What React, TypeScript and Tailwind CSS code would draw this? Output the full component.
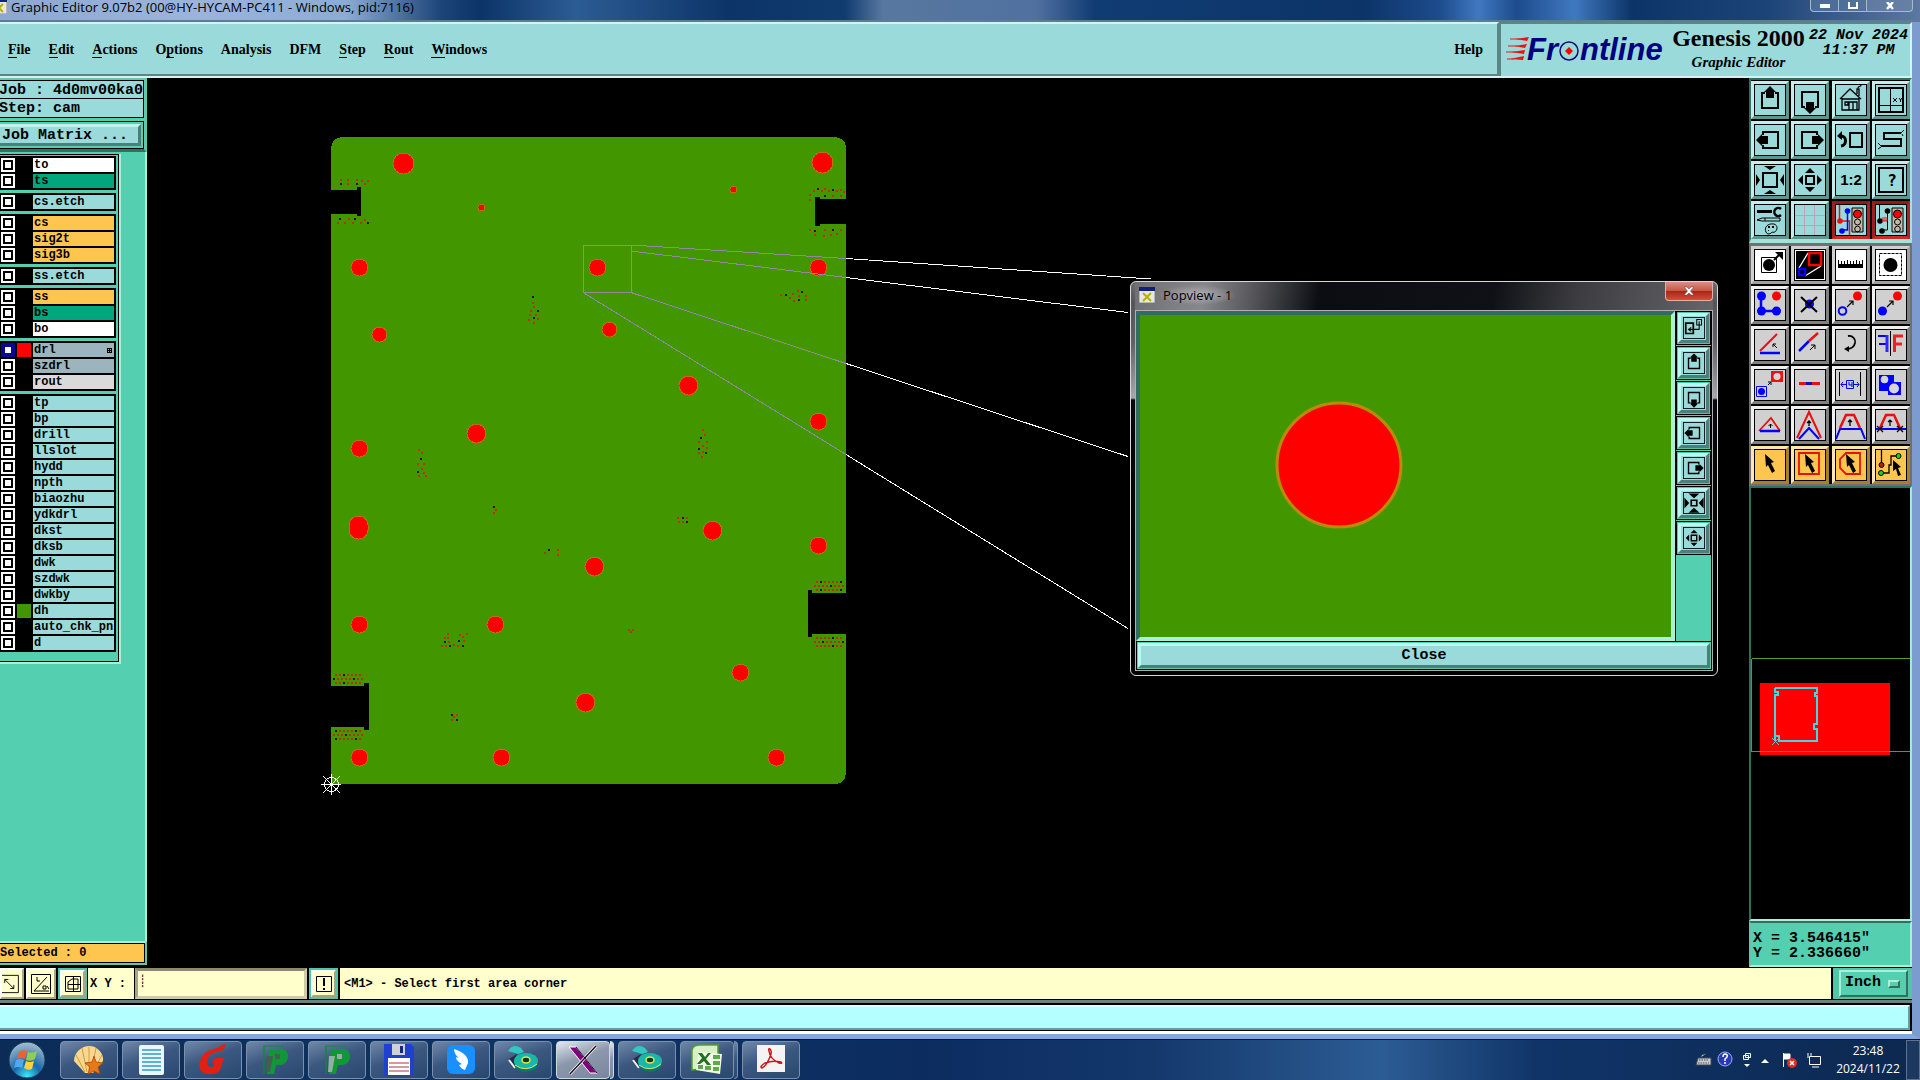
import type { ReactNode } from 'react';

type Point = [number, number];

interface Layer {
  name: string;
  bg: string;
  swatch?: string;
  active?: boolean;
  grid?: boolean;
}

const SIGNAL = 'bg-[#ffc64f]';
const MASK = 'bg-[#00a67c]';
const MISC = 'bg-[#9bdada]';

const layerGroups: Layer[][] = [
  [{ name: 'to', bg: 'bg-white' }, { name: 'ts', bg: MASK }],
  [{ name: 'cs.etch', bg: MISC }],
  [{ name: 'cs', bg: SIGNAL }, { name: 'sig2t', bg: SIGNAL }, { name: 'sig3b', bg: SIGNAL }],
  [{ name: 'ss.etch', bg: MISC }],
  [{ name: 'ss', bg: SIGNAL }, { name: 'bs', bg: MASK }, { name: 'bo', bg: 'bg-white' }],
  [
    { name: 'drl', bg: 'bg-[#9bb4be]', swatch: 'bg-[#ff0000]', active: true, grid: true },
    { name: 'szdrl', bg: 'bg-[#9bb4be]' },
    { name: 'rout', bg: 'bg-[#dadada]' },
  ],
  [
    { name: 'tp', bg: MISC },
    { name: 'bp', bg: MISC },
    { name: 'drill', bg: MISC },
    { name: 'llslot', bg: MISC },
    { name: 'hydd', bg: MISC },
    { name: 'npth', bg: MISC },
    { name: 'biaozhu', bg: MISC },
    { name: 'ydkdrl', bg: MISC },
    { name: 'dkst', bg: MISC },
    { name: 'dksb', bg: MISC },
    { name: 'dwk', bg: MISC },
    { name: 'szdwk', bg: MISC },
    { name: 'dwkby', bg: MISC },
    { name: 'dh', bg: MISC, swatch: 'bg-[#429700]' },
    { name: 'auto_chk_pnl', bg: MISC },
    { name: 'd', bg: MISC },
  ],
];

// label and index of the underlined mnemonic
const menus: [string, number][] = [
  ['File', 0],
  ['Edit', 0],
  ['Actions', 0],
  ['Options', 1],
  ['Analysis', -1],
  ['DFM', -1],
  ['Step', 0],
  ['Rout', 0],
  ['Windows', 0],
];

/* ---------- toolbar glyphs, all on a 32x32 grid ---------- */

const BLUE = '#0000ff';
const RED = '#e81010';

const panGlyph = (
  <>
    <path d="M11 9H8v15h16V9h-3" fill="none" stroke="#000" strokeWidth="2" />
    <path d="M16 2l6 6h-2v6h-8V8h-2z" />
  </>
);

const cursorPath = 'M11 5l9 8-3 1 4 8-3 2-4-8-2 2z';

const glyphs: Record<string, ReactNode> = {
  up: panGlyph,
  down: <g transform="rotate(180 16 16)">{panGlyph}</g>,
  left: <g transform="rotate(-90 16 16)">{panGlyph}</g>,
  right: <g transform="rotate(90 16 16)">{panGlyph}</g>,
  home: (
    <g fill="none" stroke="#000" strokeWidth="1.3">
      <path d="M5 15L15 5l11 10M7 14v12h17V14M7 15h17M22 10V5h2v7M23 4c0-2 3-1 3-3" />
      <path d="M14 26v-8h8v8M18 18v8M10 18h3v3h-3z" />
    </g>
  ),
  split: (
    <>
      <path d="M4 4h24v24H4z" fill="none" stroke="#000" strokeWidth="2" />
      <path d="M15.500 4v24M4 21.500h24" stroke="#000" />
      <path d="M18 14l4 4m0-4l-4 4m6-4l1.500 2 1.500-2m-1.500 2v2" fill="none" stroke="#000" />
    </>
  ),
  prev: (
    <>
      <path d="M15 9h12v14H15z" fill="none" stroke="#000" strokeWidth="2" />
      <path d="M6 22c6-1 6-10 0-10H5" fill="none" stroke="#000" strokeWidth="3" />
      <path d="M2 12l5-5v9z" />
    </>
  ),
  snake: (
    <>
      <path d="M26 9H9v6h17v7H6" fill="none" stroke="#000" strokeWidth="2" />
      <path d="M26 9l3-3m-1 6l-1-2M6 22l-3-3m0 6l3-2" stroke="#000" />
    </>
  ),
  zoomOut: (
    <>
      <path d="M9 9h14v14H9z" fill="none" stroke="#000" strokeWidth="2" />
      <path d="M10 2h12l-6 4zM10 30h12l-6-4zM2 10v12l4-6zM30 10v12l-4-6z" />
    </>
  ),
  zoomIn: (
    <>
      <path d="M12 12h8v8h-8z" fill="none" stroke="#000" strokeWidth="2" />
      <path d="M11 9h10l-5-5zM11 23h10l-5 5zM9 11v10l-5-5zM23 11v10l5-5z" />
    </>
  ),
  shrink: (
    <>
      <path d="M12 12h8v8h-8z" fill="none" stroke="#000" strokeWidth="2.500" />
      <path d="M8 2h16l-8 7zM8 30h16l-8-7zM2 8v16l7-8zM30 8v16l-7-8z" />
    </>
  ),
  ratio: (
    <text x="16" y="21" textAnchor="middle" fontSize="15" fontWeight="700" fontFamily="Liberation Sans, sans-serif">
      1:2
    </text>
  ),
  query: (
    <>
      <path d="M4 4h24v24H4z" fill="none" stroke="#000" strokeWidth="2" />
      <text x="17" y="22" textAnchor="middle" fontSize="16" fontWeight="700" fontFamily="DejaVu Sans Mono, monospace">
        ?
      </text>
    </>
  ),
  tools: (
    <>
      <path d="M3 6h15v3H3z" />
      <path d="M27 5a4 4 0 1 0 0 6" fill="none" stroke="#000" strokeWidth="2.500" />
      <path d="M3 16l5-2h18v3H8zM11 14v3M20 20c-7-1-10 4-8 8 1 3 5 2 6 0 4 2 8-6 2-8z" fill="none" stroke="#000" />
      <path d="M14 22h2v2h-2zM18 22h2v2h-2zM14 26h1v1h-1z" />
    </>
  ),
  grid: <path d="M10.500 1v30M20.500 1v30M1 11.500h30M1 21.500h30" stroke="#c4a0b4" />,
  netColor: (
    <>
      <path d="M4.500 1v16h10v14" fill="none" stroke={RED} strokeWidth="1.500" />
      <path d="M12.500 6v20H7" fill="none" stroke={BLUE} strokeWidth="1.500" />
      <circle cx="5" cy="17" r="2.800" fill={RED} />
      <circle cx="12.500" cy="7" r="2.800" fill={BLUE} />
      <circle cx="7" cy="27" r="2.800" fill={BLUE} />
      <path d="M17 4h11v24H17z" fill="#c4b8a8" stroke="#000" />
      <circle cx="22.500" cy="10" r="4" fill="#f00" stroke="#000" />
      <circle cx="22.500" cy="18" r="3" fill="none" stroke="#000" />
      <circle cx="22.500" cy="25" r="2.800" fill="none" stroke="#000" />
    </>
  ),
  netBlack: (
    <>
      <path d="M4.500 1v16M12.500 6v20H7" fill="none" stroke="#000" />
      <circle cx="5" cy="17" r="2.800" />
      <circle cx="12.500" cy="7" r="2.800" />
      <circle cx="7" cy="27" r="2.800" />
      <path d="M7 17h5M8 13v4m2-4v4m2-4v4" stroke={RED} />
      <path d="M17 4h11v24H17z" fill="#c4b8a8" stroke="#000" />
      <circle cx="22.500" cy="10" r="4" fill="#f00" stroke="#000" />
      <circle cx="22.500" cy="18" r="3" fill="none" stroke="#000" />
      <circle cx="22.500" cy="25" r="2.800" fill="none" stroke="#000" />
    </>
  ),
  padMove: (
    <>
      <path d="M7.500 8.500h15v15h-15z" fill="none" stroke="#000" />
      <circle cx="15" cy="16" r="6" />
      <path d="M20 11l5-5" stroke="#000" strokeWidth="2" />
      <path d="M21 3h8v8z" />
    </>
  ),
  popview: (
    <>
      <path d="M2 2h28v28H2z" />
      <path d="M14 4L5 19M27 17L11 27" stroke="#fff" strokeWidth="1.300" />
      <path d="M15 4h12v12H15z" fill="none" stroke="#f00" strokeWidth="2.500" />
      <path d="M5 20h6v6H5z" fill="none" stroke={BLUE} strokeWidth="2.500" />
    </>
  ),
  ruler: (
    <path d="M3 19V11h1v4h2v-3h1v3h2v-3h1v3h2v-4h1v4h2v-3h1v3h2v-3h1v3h2v-4h1v4h2v-3h1v3h2v-4h1v8z" />
  ),
  dashedPad: (
    <>
      <path d="M4.500 4.500h22v22h-22z" fill="none" stroke="#000" strokeDasharray="3 1" />
      <circle cx="15.500" cy="16" r="7" />
    </>
  ),
  copyNet: (
    <>
      <path d="M7 7v15h15" fill="none" stroke={BLUE} strokeWidth="2.500" />
      <circle cx="7.500" cy="7" r="4.500" fill={BLUE} />
      <circle cx="7.500" cy="22" r="4.500" fill={BLUE} />
      <circle cx="22.500" cy="22" r="4.500" fill={BLUE} />
      <circle cx="22.500" cy="7" r="4.500" fill="#f00" />
    </>
  ),
  erase: (
    <>
      <circle cx="15.500" cy="15" r="4.500" fill={BLUE} />
      <path d="M7 8l16 15M23 8L7 23" stroke="#000" strokeWidth="2" />
    </>
  ),
  copyPad: (
    <>
      <circle cx="7.500" cy="22" r="3.800" fill="none" stroke={BLUE} strokeWidth="2" />
      <circle cx="22.500" cy="7" r="4.500" fill="#f00" />
      <path d="M12 18l6-6m-4 0h4v4" fill="none" stroke="#000" strokeWidth="1.200" />
    </>
  ),
  movePad: (
    <>
      <circle cx="7.500" cy="22" r="4.500" fill={BLUE} />
      <circle cx="22.500" cy="7" r="4.500" fill="#f00" />
      <path d="M12 18l6-6m-4 0h4v4" fill="none" stroke="#000" strokeWidth="1.200" />
    </>
  ),
  angle: (
    <>
      <path d="M6 22L23 5" stroke={RED} strokeWidth="2" />
      <path d="M6 24h20" stroke={BLUE} strokeWidth="2.500" />
      <path d="M23 19l-4-4m0 3v-3h3" fill="none" stroke="#000" />
    </>
  ),
  extend: (
    <>
      <path d="M5 22l10-10" stroke={BLUE} strokeWidth="2.500" />
      <path d="M15 12l9-8" stroke={RED} strokeWidth="2.500" />
      <path d="M16 21l5-5m-4 0h4v4" fill="none" stroke="#000" />
    </>
  ),
  rotate: (
    <>
      <path d="M13 7c5-1 8 4 7 7-1 5-4 6-9 6" fill="none" stroke="#000" strokeWidth="1.800" />
      <path d="M9 20l5-3v6z" />
    </>
  ),
  mirror: (
    <>
      <path d="M3 7h10M4 15h9" fill="none" stroke={BLUE} strokeWidth="2" />
      <path d="M12 6v17" stroke="#2a2aff" strokeWidth="3" />
      <path d="M15.500 2v25" stroke="#000" />
      <path d="M19.500 23V7H28M19 15h8" fill="none" stroke="#f02020" strokeWidth="3" />
    </>
  ),
  moveLayer: (
    <>
      <path d="M2.500 17.500h10v10h-10z" fill="none" stroke={BLUE} />
      <circle cx="7.500" cy="22.500" r="3.500" fill={BLUE} />
      <path d="M17 2h12v11H17z" fill="#f01010" />
      <circle cx="23" cy="7.500" r="3.500" fill="#d6d6d6" />
      <path d="M14 16l3-3m-3 0h3v3" fill="none" stroke="#000" />
    </>
  ),
  segment: (
    <>
      <path d="M5 14.500h21" stroke={RED} strokeWidth="3" />
      <path d="M12 14.500h6" stroke="#1010c0" strokeWidth="3" />
    </>
  ),
  spacing: (
    <>
      <path d="M4.500 3v24M25.500 3v24" stroke="#000" />
      <path d="M6 15.500h5m8 0h5M8 13l-2 2.500 2 2.500M22 13l2 2.500-2 2.500M11.500 11.500h7v8h-7zM14 13v3h3m0-3v5" fill="none" stroke={BLUE} />
    </>
  ),
  cluster: (
    <>
      <path d="M4 6h15v7h7v13H13v-4H4z" fill={BLUE} />
      <circle cx="9.500" cy="10.500" r="3.800" fill="#d6d6d6" />
      <circle cx="19" cy="19.500" r="5" fill="#d6d6d6" />
    </>
  ),
  triLow: (
    <>
      <path d="M5 22L17 9l9 13" fill="none" stroke={RED} strokeWidth="1.800" />
      <path d="M6 22h20" stroke={BLUE} strokeWidth="2.500" />
      <path d="M16.500 19v-4m-2 2l2-2 2 2" fill="none" stroke="#000" />
    </>
  ),
  triHigh: (
    <>
      <path d="M3 29L15 3l12 26" fill="none" stroke={RED} strokeWidth="2" />
      <path d="M5 30l10-11 10 11" fill="none" stroke={BLUE} strokeWidth="2" />
      <path d="M15 17v-5m-2 2l2-2 2 2" fill="none" stroke="#000" strokeWidth="1.300" />
    </>
  ),
  trapezoid: (
    <>
      <path d="M1 30l4-10h21l4 10" fill="none" stroke={BLUE} strokeWidth="2" />
      <path d="M5 19l6-13h8l6 13" fill="none" stroke={RED} strokeWidth="2.500" />
      <path d="M15 17v-6m-2 2l2-2 2 2" fill="none" stroke="#000" strokeWidth="1.300" />
    </>
  ),
  trapezoidCut: (
    <>
      <path d="M1 20h30" stroke={BLUE} strokeWidth="2" />
      <path d="M5 19l6-13h8l6 13" fill="none" stroke={RED} strokeWidth="2.500" />
      <path d="M15 17v-6m-2 2l2-2 2 2M2 17l6 6m0-6l-6 6M22 17l6 6m0-6l-6 6" fill="none" stroke="#000" strokeWidth="1.200" />
    </>
  ),
  select: <path d={cursorPath} />,
  selectRect: (
    <>
      <path d="M5 4h20v21H5z" fill="none" stroke={RED} strokeWidth="1.800" />
      <path d={cursorPath} />
    </>
  ),
  selectPoly: (
    <>
      <path d="M11 4h14v21H11l-6-6v-9z" fill="none" stroke={RED} strokeWidth="1.800" />
      <path d={cursorPath} />
    </>
  ),
  selectNet: (
    <>
      <path d="M6.500 1v15M6 24h8v-8h2V7h7" fill="none" stroke="#000" strokeWidth="1.300" />
      <circle cx="6.500" cy="16" r="2.500" fill="#c02000" stroke="#000" />
      <circle cx="6" cy="24" r="2.500" fill="#20d020" stroke="#000" />
      <circle cx="23.500" cy="7" r="2.500" fill="#20d020" stroke="#000" />
      <path d="M18 11l8 7-3 1 3 7-3 1-2-7-3 2z" />
    </>
  ),
  detach: (
    <>
      <path d="M4 9h11v15H4z" fill="none" stroke="#000" strokeWidth="2.500" />
      <path d="M20 3.500h7v8h-7zM23.500 6v12H8m4-3l-4 3 4 3" fill="none" stroke="#000" strokeWidth="1.500" />
    </>
  ),
};

const viewTools = [
  'up', 'down', 'home', 'split',
  'left', 'right', 'prev', 'snake',
  'zoomOut', 'zoomIn', 'ratio', 'query',
  'tools', 'grid', 'netColor', 'netBlack',
];

const editTools = [
  'padMove', 'popview', 'ruler', 'dashedPad',
  'copyNet', 'erase', 'copyPad', 'movePad',
  'angle', 'extend', 'rotate', 'mirror',
  'moveLayer', 'segment', 'spacing', 'cluster',
  'triLow', 'triHigh', 'trapezoid', 'trapezoidCut',
  'select', 'selectRect', 'selectPoly', 'selectNet',
];

const tones = {
  aqua: 'bg-[#9bdada] border-t-[#c4eeec] border-l-[#c4eeec] border-b-[#5f9490] border-r-[#5f9490]',
  alert: 'bg-[#9bdada] border-t-[#8c1c1c] border-l-[#a02020] border-b-[#d02828] border-r-[#b02020]',
  white: 'bg-white border-[#d0d0d0] border-b-[#a0a0a0] border-r-[#a0a0a0]',
  grey: 'bg-[#d0d0d0] border-t-[#f0f0f0] border-l-[#f0f0f0] border-b-[#808080] border-r-[#808080]',
  amber: 'bg-[#ffc64f] border-t-[#ffe6b0] border-l-[#ffe6b0] border-b-[#a8802c] border-r-[#a8802c]',
};

function ToolButton({ name, tone }: { name: string; tone: keyof typeof tones }) {
  return (
    <button aria-label={name} className={`h-[38px] w-[38px] border-[3px] ${tones[tone]}`}>
      <svg viewBox="0 0 32 32" className="block h-8 w-8">
        <rect x="0.500" y="0.500" width="31" height="31" fill="none" stroke="#000" />
        {glyphs[name]}
      </svg>
    </button>
  );
}

function editTone(index: number): keyof typeof tones {
  if (index < 4) return 'white';
  return index < 20 ? 'grey' : 'amber';
}

/* ---------- board ---------- */

const holes: [number, number, number][] = [
  [403, 163, 10], [822, 162, 10], [733, 189, 3], [481, 207, 3],
  [359, 267, 8], [597, 267, 8], [818, 267, 8], [379, 334, 7],
  [609, 329, 7], [688, 385, 9], [818, 421, 8], [476, 433, 9],
  [359, 448, 8], [712, 530, 9], [818, 545, 8], [594, 566, 9],
  [495, 624, 8], [359, 624, 8], [740, 672, 8], [585, 702, 9],
  [359, 757, 8], [501, 757, 8], [776, 757, 8],
];

const vias: Point[] = [
  [340, 179], [340, 183], [347, 179], [347, 183], [356, 179], [356, 183], [361, 180], [367, 180], [364, 183],
  [339, 218], [337, 222], [344, 222], [348, 218], [354, 218], [352, 222], [360, 222], [364, 219], [367, 222],
  [809, 194], [809, 199], [813, 190], [817, 188], [821, 190], [824, 188], [828, 190], [832, 189], [836, 190],
  [840, 189], [843, 191], [824, 195], [832, 195], [840, 195],
  [809, 229], [814, 230], [814, 234], [824, 229], [823, 235], [832, 229], [830, 234], [840, 229], [836, 233],
  [532, 296], [532, 302], [533, 306], [530, 310], [537, 310], [529, 314], [535, 314], [528, 319], [533, 317],
  [537, 318], [533, 322],
  [780, 294], [785, 294], [789, 297], [792, 293], [797, 290], [801, 291], [798, 295], [805, 295], [793, 300],
  [798, 299], [805, 299],
  [702, 429], [704, 434], [700, 437], [698, 441], [706, 441], [702, 445], [698, 448], [702, 451], [706, 447],
  [698, 452], [705, 452], [701, 456],
  [418, 449], [421, 452], [420, 458], [417, 463], [423, 463], [421, 468], [417, 471], [423, 472], [418, 475],
  [425, 475],
  [493, 506], [495, 509], [493, 512], [544, 552], [548, 549], [557, 549], [557, 554],
  [677, 517], [682, 517], [686, 517], [678, 521], [682, 521], [686, 521],
  [447, 633], [444, 637], [447, 637], [444, 641], [448, 641], [441, 645], [445, 645], [449, 645], [453, 644],
  [459, 634], [466, 633], [458, 640], [462, 636], [463, 640], [457, 645], [462, 645],
  [628, 629], [632, 629], [630, 631], [451, 714], [456, 714], [453, 716], [451, 719], [456, 719],
];

// three staggered rows next to each edge connector
function connectorRows(x: number, y: number): Point[] {
  return [0, 1, 2].flatMap((row) =>
    Array.from({ length: row === 1 ? 8 : 7 }, (_, i): Point => [x + i * 4 + (row === 1 ? 0 : 2), y + row * 4]),
  );
}

const connectorVias = [
  ...connectorRows(814, 581),
  ...connectorRows(814, 637),
  ...connectorRows(333, 674),
  ...connectorRows(333, 730),
];

function BoardCanvas() {
  return (
    <svg className="absolute inset-0 block h-full w-full" shapeRendering="crispEdges">
      <g transform="translate(-147 -78)">
        <g stroke="#fff">
          <path d="M846 258.500L1151 279M846 277.500L1128 312.500M846 363.500L1128 456.500M846 454.500L1128 628.500" />
        </g>
        <path
          fill="#429700"
          d="M342 137H835Q846 138 846 148V199H820V197H815V226H820V224H846V593H812V590H808V637H812V634H846V773Q845 784 835 784H331V727H364V730H369V683H364V686H331V214H357V216H361V187H357V190H331V148Q332 138 342 137Z"
        />
        {holes.map(([x, y, r]) => (
          <circle key={`${x}-${y}`} cx={x + 0.5} cy={y + 0.5} r={r + 0.5} fill="#f00" stroke="#c07000" />
        ))}
        <rect x="349" y="516" width="19" height="23" rx="9" fill="#f00" stroke="#c07000" />
        {vias.map(([x, y], i) => (
          <rect key={i} x={x} y={y} width="2" height="2" fill={i % 4 === 1 ? '#301000' : '#c03000'} />
        ))}
        {connectorVias.map(([x, y], i) => (
          <rect key={i} x={x} y={y} width="2" height="2" fill={i % 5 === 1 ? '#301000' : '#b83000'} />
        ))}
        <path
          fill="none"
          stroke="#9488a0"
          d="M583.500 245.500H631.500V292.500H583.500ZM631 245L846 258.500M631 251L846 277.500M631 292.500L846 363.500M584 293L846 454.500"
        />
        <g fill="none" stroke="#fff">
          <path d="M321 784.500H341M331.500 774V795M323 776L340 793M340 776L323 793" />
          <circle cx="331.500" cy="784.500" r="7" />
        </g>
      </g>
    </svg>
  );
}

/* ---------- panels ---------- */

function XIcon() {
  return (
    <svg viewBox="0 0 16 16" className="block h-4 w-4 shrink-0">
      <path d="M0 1h16v15H0z" fill="#e8e8e0" stroke="#888" />
      <path d="M0 0h16v4H0z" fill="#102080" />
      <path d="M4 6l8 8M12 6l-8 8" stroke="#b8b000" strokeWidth="2" />
    </svg>
  );
}

function Popview() {
  const tools = ['detach', 'up', 'down', 'left', 'right', 'shrink', 'zoomIn'];
  return (
    <section
      aria-label="Popview"
      className="absolute left-[983px] top-[203px] flex h-[395px] w-[588px] flex-col rounded-md border border-[#d8d8d8] bg-[linear-gradient(#6c6c70,#55555a_20px,#606064_60px,#a8a8ac_116px,#08080a_118px,#000)] px-1 pb-1"
    >
      <header className="flex h-7 items-start justify-between rounded-t bg-[linear-gradient(100deg,#707074,#88888c_12%,#5a5a5e_20%,#0c0d12_32%,#101116_62%,#3c3c40_76%,#66666a)] pl-1">
        <div className="flex h-[25px] items-center gap-1">
          <XIcon />
          <h2 className="rounded-full bg-[radial-gradient(closest-side,#b0b0b4,transparent)] px-1 font-['Open_Sans',sans-serif] text-[13px] leading-5 text-black">
            Popview - 1
          </h2>
        </div>
        <button
          aria-label="Close popview"
          className="flex h-[19px] w-12 items-center justify-center rounded-b border border-t-0 border-[#e0b0a8] bg-[linear-gradient(#d89084,#c85848_48%,#a82414_50%,#d05038)]"
        >
          <svg viewBox="0 0 12 10" className="h-[10px] w-3">
            <path d="M1 1h3l2 2 2-2h3L7.500 5 11 9H8L6 7 4 9H1l3.500-4z" fill="#fff" stroke="#504040" strokeWidth="0.500" />
          </svg>
        </button>
      </header>
      <div className="flex min-h-0 flex-1 flex-col border border-[#b0b0b0] bg-black">
        <div className="flex min-h-0 flex-1 gap-px">
          <div className="min-w-0 flex-1 border-4 border-b-[#a8f0d8] border-l-[#2f6c62] border-r-[#a8f0d8] border-t-[#2f6c62] bg-[#429700]">
            <svg className="block h-full w-full">
              <circle cx="199" cy="150" r="62" fill="#f00" stroke="#b88c08" strokeWidth="3" />
            </svg>
          </div>
          <div className="mr-px flex w-[35px] flex-col gap-px bg-[#54cfb0]">
            {tools.map((name) => (
              <div key={name} className="border border-black bg-[#54c4a8] p-px">
                <button
                  aria-label={`popview ${name}`}
                  className="flex h-[30px] w-full items-center justify-center border-[3px] border-b-[#4a807c] border-l-[#b8f8f0] border-r-[#4a807c] border-t-[#b8f8f0] bg-[#9bdada]"
                >
                  <svg viewBox="0 0 32 32" className="block h-[22px] w-[22px]">
                    <rect x="0.500" y="0.500" width="31" height="31" fill="none" stroke="#000" strokeWidth="1.500" />
                    {glyphs[name]}
                  </svg>
                </button>
              </div>
            ))}
          </div>
        </div>
        <div className="border border-black bg-[#54cfb0] p-px">
          <button className="block h-[25px] w-full border-[3px] border-b-[#4a807c] border-l-[#b8f8f0] border-r-[#4a807c] border-t-[#b8f8f0] bg-[#9bdada] font-['Liberation_Mono',monospace] text-[15px] leading-[19px] font-bold">
            Close
          </button>
        </div>
      </div>
    </section>
  );
}

function LayerRow({ layer }: { layer: Layer }) {
  return (
    <li>
      <label className="flex h-[14px] gap-0.5">
        <span className={`flex h-[14px] w-[14px] p-0.5 ${layer.active ? 'bg-[#0a0a90]' : 'bg-white'}`}>
          <input
            type="checkbox"
            className={`h-[10px] w-[10px] appearance-none border-2 bg-white ${layer.active ? 'border-[#0a0a90]' : 'border-black'}`}
          />
        </span>
        <span className={`h-[14px] w-[14px] ${layer.swatch ?? 'bg-black'}`} />
        <span className={`flex h-[14px] min-w-0 flex-1 items-center justify-between overflow-hidden pl-px pr-0.5 leading-[14px] ${layer.bg}`}>
          {layer.name}
          {layer.grid && (
            <svg viewBox="0 0 5 5" className="h-[5px] w-[5px] shrink-0" shapeRendering="crispEdges">
              <path d="M.5.5h4v4h-4zM2.500 0v5M0 2.500h5" fill="none" stroke="#000" strokeWidth="1" />
            </svg>
          )}
        </span>
      </label>
    </li>
  );
}

function JobPanel() {
  return (
    <aside className="flex w-[147px] shrink-0 flex-col bg-[#54cfb0] font-['Liberation_Mono',monospace] font-bold text-black">
      <div className="mr-px border-b-[3px] border-r-2 border-t-2 border-b-[#2f7060] border-r-[#6ac4ac] border-t-[#6ac4ac] text-[15px]">
        <div className="border border-l-0 border-black bg-[#9bdada]">
          <p className="-ml-px h-[18px] overflow-hidden whitespace-nowrap border-b border-black leading-[19px]">Job : 4d0mv00ka0</p>
          <p className="-ml-px h-[18px] leading-5">Step: cam</p>
        </div>
        <div className="mt-[3px] border border-l-0 border-black py-0.5 pr-0.5">
          <button className="block h-[22px] w-full border-[3px] border-l-0 border-b-[#4a807c] border-r-[#4a807c] border-t-[#c4f0ec] bg-[#9bdada] pl-0.5 text-left leading-[18px]">
            Job Matrix ...
          </button>
        </div>
      </div>
      <div className="flex-1 border-r-2 border-[#a8f0d8] pt-0.5">
        <div className="w-[121px] border-b-2 border-r-2 border-[#a8f0d8]">
          <div className="flex flex-col gap-[3px] border border-l-0 border-black pt-px pr-0.5 pb-[9px]">
            {layerGroups.map((group) => (
              <ul key={group[0].name} className="flex flex-col gap-0.5 bg-black py-0.5 pr-0.5 pl-px text-[12px]">
                {group.map((layer) => (
                  <LayerRow key={layer.name} layer={layer} />
                ))}
              </ul>
            ))}
          </div>
        </div>
      </div>
      <div className="border-b-2 border-black">
        <div className="border-y-2 border-r-2 border-[#6ac4ac] border-t-[#a8f0d8]">
          <p className="h-5 border border-l-0 border-black bg-[#ffc64f] text-[12px] leading-[18px]">Selected : 0</p>
        </div>
      </div>
    </aside>
  );
}

function Overview() {
  return (
    <div className="relative min-h-0 flex-1 border-2 border-b-[#a8f0d8] border-l-[#2f7060] border-r-[#a8e8dc] border-t-[#2f7060] bg-black">
      <svg className="absolute inset-0 block h-full w-full" shapeRendering="crispEdges">
        <rect x="9" y="195" width="130" height="72" fill="#f00" />
        <path d="M0.500 170.500H160M0.500 170.500V263.500H160" fill="none" stroke="#5a9c20" />
        <path
          d="M24 200H66V205H64V208H66V236H63V241H66V253H28V248H24V244M24 200V204H27V207H24V253"
          fill="none"
          stroke="#40d8e0"
          strokeWidth="2"
        />
        <path d="M21 250l7 7m0-7l-7 7" stroke="#90b0c0" />
      </svg>
    </div>
  );
}

function ToolPanel() {
  return (
    <aside className="flex w-[163px] shrink-0 flex-col bg-black">
      <div className="border-2 border-b-[4px] border-[#a8e0dc] border-l-[#2f7060] border-t-[#2f7060] bg-black pt-px">
        <div className="grid grid-cols-4 gap-0.5">
          {viewTools.map((name, i) => (
            <ToolButton key={name} name={name} tone={i > 13 ? 'alert' : 'aqua'} />
          ))}
        </div>
      </div>
      <div className="border-2 border-t-[3px] border-[#707070] bg-black">
        <div className="grid grid-cols-4 gap-0.5">
          {editTools.map((name, i) => (
            <ToolButton key={name} name={name} tone={editTone(i)} />
          ))}
        </div>
      </div>
      <Overview />
      <div className="h-[46px] border-2 border-b-[#a8f0d8] border-l-[#6ac4ac] border-r-[#a8f0d8] border-t-[#2f7060] bg-[#54cfb0] pl-0.5 pt-2 font-['Liberation_Mono',monospace] text-[15px] leading-[15px] font-bold">
        <p>X = 3.546415"</p>
        <p>Y = 2.336660"</p>
      </div>
    </aside>
  );
}

function FrontlineLogo() {
  return (
    <svg viewBox="0 0 162 36" className="block h-9 w-[162px] overflow-visible" role="img" aria-label="Frontline">
      <path d="M4 6H14M2 13H12M0 19H10M1 26H8" stroke="#e81818" />
      <path d="M9 6l14-2-2 4zM8 13l13-2-2 4zM5 19l14-2-1 4zM4 26l14-3-1 4z" fill="#f01010" />
      <g fill="#000080" fontFamily="Liberation Sans, sans-serif" fontSize="31" fontWeight="700" fontStyle="italic">
        <text x="21" y="27">Fr</text>
        <text x="74" y="27">ntline</text>
      </g>
      <circle cx="63" cy="18" r="9" fill="none" stroke="#101070" strokeWidth="1.500" />
      <path d="M63 14l4 4-4 4-4-4z" fill="#f00" />
    </svg>
  );
}

function MenuBar() {
  return (
    <div className="flex h-14 shrink-0 border-b-2 border-[#d4f4f2] font-['Liberation_Serif',serif] font-bold">
      <nav className="flex flex-1 items-center justify-between border-y-2 border-r-2 border-b-[#5a8684] border-r-[#5a8684] border-t-[#d4f4f2] bg-[#9bdada] pl-2 pr-[14px] text-[14px]">
        <ul className="flex gap-[18px]">
          {menus.map(([label, key]) => (
            <li key={label}>
              <button>
                {key < 0 ? (
                  label
                ) : (
                  <>
                    {label.slice(0, key)}
                    <span className="border-b border-black">{label[key]}</span>
                    {label.slice(key + 1)}
                  </>
                )}
              </button>
            </li>
          ))}
        </ul>
        <button>Help</button>
      </nav>
      <div className="flex w-[413px] border-2 border-b-0 border-l-[#5a8684] border-r-[#d4f4f2] border-t-[#5a8684] bg-[#9bdada] pl-[5px]">
        <div className="pt-[9px]">
          <FrontlineLogo />
        </div>
        <div className="flex-1 text-center">
          <h1 className="text-[24px] leading-7">Genesis 2000</h1>
          <p className="text-[15px] leading-5 italic">Graphic Editor</p>
        </div>
        <p className="pt-1 pr-0.5 text-center font-['Liberation_Mono',monospace] text-[15px] leading-[15px] italic">
          22 Nov 2024
          <br />
          11:37 PM
        </p>
      </div>
    </div>
  );
}

const noteButton = 'flex items-center justify-center border-2 border-b-[#a8a484] border-l-white border-r-[#a8a484] border-t-white bg-[#ffffcc]';

function MessageBar() {
  return (
    <div className="flex h-[33px] shrink-0 gap-0.5 bg-black py-px font-['Liberation_Mono',monospace] text-[12px] font-bold">
      <button aria-label="Snap off" className={`${noteButton} w-6`}>
        <svg viewBox="0 0 22 22" className="h-[22px] w-[22px]" fill="none" stroke="#000">
          <path d="M-4 1.500h22v19H-4M3 6l10 10M3 10V6h4M13 12v4H9" />
        </svg>
      </button>
      <button aria-label="Angle lock" className={`${noteButton} w-[30px]`}>
        <svg viewBox="0 0 22 22" className="h-[22px] w-[22px]" fill="none" stroke="#000">
          <path d="M1.500 1.500h19v19h-19zM4 18L17 4M4 18h15M7 4v4h3M13 13h3v3h-3zM17 13l2 3" />
        </svg>
      </button>
      <div className="w-[29px] bg-[#54c4a8] p-0.5">
        <button aria-label="Snap grid" className={`${noteButton} h-full w-full`}>
          <svg viewBox="0 0 18 18" className="h-[18px] w-[18px]" fill="none" stroke="#000">
            <path d="M1.500 1.500h15v15h-15zM9.500 2v14M4 9.500h12M4 14V7l4-3h6v10z" />
          </svg>
        </button>
      </div>
      <div className="-ml-px flex w-[219px] bg-black">
        <label htmlFor="xy" className="w-[46px] bg-[#ffffcc] pl-0.5 text-[12px] leading-8 whitespace-pre">
          X Y :
        </label>
        <input
          id="xy"
          className="ml-px min-w-0 flex-1 border-[3px] border-b-[#cfcba6] border-l-[#a8a484] border-r-[#cfcba6] border-t-[#8c8a74] bg-[#ffffcc] px-px pb-1 outline-none"
          defaultValue="┊"
        />
      </div>
      <div className="w-[29px] bg-[#54c4a8] p-0.5">
        <button aria-label="Alerts" className={`${noteButton} h-full w-full`}>
          <svg viewBox="0 0 18 18" className="h-[18px] w-[18px]">
            <path d="M1.500 1.500h15v15h-15z" fill="none" stroke="#000" />
            <path d="M8 3h2v8H8zM8 13h2v2H8z" />
          </svg>
        </button>
      </div>
      <p className="flex-1 bg-[#ffffcc] pl-1 leading-8">&lt;M1&gt; - Select first area corner</p>
      <div className="relative w-[79px] bg-[#54c4a8] py-0.5 pr-1 pl-1.5">
        <select
          aria-label="Units"
          className="h-full w-full appearance-none border-2 border-b-[#2f7060] border-l-[#a8f0d8] border-r-[#2f7060] border-t-[#a8f0d8] bg-[#54cfb0] pl-1 text-[15px] outline-none"
        >
          <option>Inch</option>
          <option>MM</option>
        </select>
        <span className="pointer-events-none absolute right-3 top-3 h-2 w-3 border-2 border-b-[#2f7060] border-l-[#a8f0d8] border-r-[#2f7060] border-t-[#a8f0d8]" />
      </div>
    </div>
  );
}

/* ---------- windows taskbar ---------- */

const discGlyph = (
  <>
    <path d="M1 7q5-8 13-3l3 4-6 2z" fill="#30c8c0" />
    <path d="M2 15l8-5 4 14-8-3z" fill="#302848" />
    <path d="M2 16l6 8" stroke="#f0f0f0" strokeWidth="2" />
    <ellipse cx="19" cy="19" rx="12" ry="9" fill="#087868" />
    <ellipse cx="19" cy="17" rx="12" ry="8" fill="#18b8a8" />
    <ellipse cx="19" cy="16" rx="4" ry="3" fill="#083830" stroke="#f0e040" strokeWidth="1.500" />
    <path d="M8 21q11 8 22-1" fill="none" stroke="#e0e060" />
  </>
);

function pGlyph(accent: string) {
  return (
    <>
      <path d="M5 30V2h20" fill="none" stroke="#108838" strokeWidth="1.200" />
      <path d="M10 5h12c10 0 9 16-1 16h-4l-2 9H8z" fill="#109838" />
      <path d="M8 12h6l-3 16H7z" fill={accent} />
      <path d="M16 10h5v5h-5z" fill={accent} />
    </>
  );
}

interface Task {
  name: string;
  art: ReactNode;
  active?: boolean;
  stacked?: boolean;
}

const taskIcons: Task[] = [
  {
    name: 'Shell',
    art: (
      <>
        <path d="M16 2c9 0 15 8 14 15L20 29h-8L1 17C1 9 8 2 16 2z" fill="#f8d890" />
        <path d="M16 28L16 3M14 28L9 4M12 28L3 11M18 28l5-24M20 28l9-17" stroke="#d89838" />
        <path d="M21 12l2 6 7 1-5 4 2 7-6-3-6 3 2-7-5-4 7-1z" fill="#e87818" stroke="#a84808" strokeWidth="0.800" />
      </>
    ),
  },
  {
    name: 'Notes',
    art: (
      <>
        <rect x="4" y="1" width="25" height="30" rx="2" fill="#e8f8ff" />
        <path d="M7 6h19M7 10h19M7 14h19M7 18h19M7 22h19M7 26h19" stroke="#3098c8" strokeWidth="1.500" />
      </>
    ),
  },
  {
    name: 'G',
    art: <path d="M29 0q-2 8-9 8-9 1-10 10 0 6 6 5l2-4h-3l3-5h9l-4 12q-2 4-9 4C2 30-1 22 5 13 10 5 16 6 22 3q3-3 7-3z" fill="#e02010" />,
  },
  { name: 'Pcb', art: pGlyph('#406050') },
  { name: 'Pcb 2', art: pGlyph('#90b0a0') },
  {
    name: 'Save',
    art: (
      <>
        <path d="M1 0h27l3 3v29H1z" fill="#2040d0" />
        <path d="M9 0h13v11H9z" fill="#d0d0d8" />
        <path d="M17 2h3v7h-3z" fill="#182878" />
        <path d="M5 14h22v17H5z" fill="#fff" />
        <path d="M6 19h20M6 23h20M6 27h20" stroke="#b03040" />
      </>
    ),
  },
  {
    name: 'Wing',
    art: (
      <>
        <rect x="2" y="1" width="28" height="29" rx="6" fill="#1890ff" />
        <path d="M9 5q15 5 14 14l-3 7q-4-1-6-5l3-1q-6-3-6-7l3 1q-5-4-5-9z" fill="#fff" />
      </>
    ),
  },
  { name: 'Disc', art: discGlyph },
  {
    name: 'X server',
    active: true,
    stacked: true,
    art: (
      <>
        <path d="M2 3h7l21 26h-7z" fill="#800080" stroke="#fff" />
        <path d="M29 2L3 30" stroke="#fff" strokeWidth="3" />
        <path d="M29 2L3 30" stroke="#201020" strokeWidth="1.500" />
        <path d="M9 3l21 26" stroke="#101010" />
      </>
    ),
  },
  { name: 'Disc 2', art: discGlyph },
  {
    name: 'Excel',
    stacked: true,
    art: (
      <>
        <path d="M1 26V6q1-5 8-5h18v22z" fill="#d8f0c8" stroke="#50a030" strokeWidth="1.500" />
        <path d="M8 8l23 2-2 20-24-4z" fill="#f0f8e8" />
        <path d="M22 11h7v4h-7zM22 17h7v4h-7zM22 23h6v4h-6zM14 22h6v4h-6zM7 21h5v4H7z" fill="#60a848" />
        <path d="M7 9h4l3 4 3-4h3l-5 6 5 6h-4l-3-4-4 3H6l5-6z" fill="#207020" />
      </>
    ),
  },
  {
    name: 'Pdf',
    art: (
      <>
        <path d="M2 1h28v27H2z" fill="#f4f4f4" />
        <path d="M15 5q3 3-1 10-3 7-7 9-3-1 3-5 8-3 16-1 2 2-2 1-9-4-10-12-1-3 1-2z" fill="none" stroke="#d01818" strokeWidth="1.500" />
      </>
    ),
  },
];

function TaskButton({ task }: { task: Task }) {
  const look = task.active
    ? 'border-[#d0d8e0] bg-[linear-gradient(160deg,#e0e8f0,#8c98ac_45%,#78869c)]'
    : 'border-[#7c90ac] bg-[linear-gradient(160deg,#7088a8,#3c5880_45%,#284870)]';
  return (
    <div className="flex h-[38px] w-[58px]">
      <button aria-label={task.name} className={`flex h-full flex-1 items-center justify-center rounded-sm border ${look}`}>
        <svg viewBox="0 0 32 32" className="h-8 w-8">
          {task.art}
        </svg>
      </button>
      {task.stacked && <span className={`h-full w-1 rounded-r-sm border border-l-0 ${look}`} />}
    </div>
  );
}

function Taskbar() {
  return (
    <footer className="flex h-[41px] shrink-0 items-center border-t border-[#060c18] bg-[linear-gradient(90deg,#0c2c58,#103460_30%,#0c2c60_48%,#14386c_60%,#2c5c94_72%,#103468_80%,#0c2850)] font-['Open_Sans',sans-serif] text-white">
      <button aria-label="Start" className="flex w-[60px] justify-start pl-2">
        <svg viewBox="0 0 38 38" className="h-[38px] w-[38px]">
          <defs>
            <radialGradient id="orb" cx="0.500" cy="0.950" r="0.950">
              <stop offset="0" stopColor="#40e8ff" />
              <stop offset="0.400" stopColor="#1868a8" />
              <stop offset="1" stopColor="#a8c0d0" />
            </radialGradient>
          </defs>
          <circle cx="19" cy="19" r="18" fill="url(#orb)" stroke="#183850" />
          <path d="M11 11q4-3 8-1l-2 8q-4-2-8 0z" fill="#f06030" />
          <path d="M20 11q4 2 9-1l-2 8q-4 3-9 1z" fill="#90d050" />
          <path d="M8 19q4-2 8 0l-2 8q-4-2-8 0z" fill="#50a8f0" />
          <path d="M18 20q4 2 8 0l-2 8q-4 2-8-1z" fill="#ffd040" />
        </svg>
      </button>
      <div className="flex gap-1">
        {taskIcons.map((task) => (
          <TaskButton key={task.name} task={task} />
        ))}
      </div>
      <div className="ml-auto flex h-full items-center">
        <svg viewBox="-4 0 140 20" className="h-5 w-[140px]">
          <path d="M4 8h13v7H2zM7 7q0-3 5-3" fill="#c8ccd0" stroke="#404850" />
          <path d="M5 10h10M4 13h11" stroke="#404850" strokeDasharray="1.500 1" />
          <circle cx="31" cy="9" r="7" fill="#2838b8" stroke="#a0b0f0" />
          <path d="M29 7q0-3 2-3 3 0 2 3l-2 2v2M31 12v2" fill="none" stroke="#fff" strokeWidth="1.500" />
          <path d="M51.500 3.500h5v4h-5zM49.500 5.500h5v4h-5z" fill="#203860" stroke="#fff" />
          <path d="M50 14h6l-3 3zM67 13h8l-4-4z" fill="#fff" />
          <path d="M89.500 3v14M90 4h6v5h-6z" fill="#fff" stroke="#fff" />
          <circle cx="98" cy="13" r="5" fill="#d83020" />
          <path d="M96 11l4 4m0-4l-4 4" stroke="#fff" strokeWidth="1.500" />
          <path d="M115.500 6.500h11v8h-11zM118 17h7M114 3v5m3-5v3" fill="none" stroke="#fff" />
        </svg>
        <p className="w-[76px] text-center text-[12px] leading-[18px]">
          23:48
          <br />
          2024/11/22
        </p>
        <button aria-label="Show desktop" className="h-full w-[14px] border border-[#607088] bg-[#1c3860]" />
      </div>
    </footer>
  );
}

function TitleBar() {
  return (
    <header className="flex h-[22px] shrink-0 items-start justify-between border-b-2 border-[#5c7c98] bg-[linear-gradient(90deg,#8ca8d0,#9cb4dc_10%,#8cacd4_18%,#1c4478_23%,#0c3468_25%,#2c5c94_30%,#0c3468_38%,#103c70_44%,#5878a0_46%,#5070a0_54%,#103c74_57%,#0c3468_71%,#1c4c8c_75%,#4078c0_77%,#1c4c8c_79%,#4078c0_82%,#0c3468_85%,#1c4478_92%,#5c78a0)]">
      <div className="flex items-start gap-1">
        <div className="-ml-[9px] -mt-0.5">
          <XIcon />
        </div>
        <p className="font-['Open_Sans',sans-serif] text-[13px] leading-[14px] text-black">
          Graphic Editor 9.07b2 (00@HY-HYCAM-PC411 - Windows, pid:7116)
        </p>
      </div>
      <div className="flex h-3 w-[110px] pr-[7px]">
        <button aria-label="Minimize" className="flex flex-1 items-center justify-center rounded-bl border border-t-0 border-[#a8b8cc] bg-[#5c7ca4]/60">
          <span className="block h-1 w-[10px] bg-white" />
        </button>
        <button aria-label="Restore" className="flex-1 border-b border-[#a8b8cc] bg-[#5c7ca4]/60">
          <span className="mx-auto block h-[7px] w-[10px] border-2 border-t-0 border-white" />
        </button>
        <button aria-label="Close" className="w-[47px] rounded-br border border-t-0 border-[#a8b8cc] bg-[#7088a8]/60">
          <svg viewBox="0 0 12 8" className="mx-auto block h-2 w-3">
            <path d="M3 0l6 7M9 0L3 7" stroke="#fff" strokeWidth="2.500" />
          </svg>
        </button>
      </div>
    </header>
  );
}

export default function App() {
  return (
    <div className="flex h-screen flex-col overflow-hidden bg-black text-black">
      <TitleBar />
      <div className="flex min-h-0 flex-1 flex-col border-b-[5px] border-r-8 border-b-[#84a8dc] border-r-[#7c9cd0]">
        <MenuBar />
        <div className="flex min-h-0 flex-1">
          <JobPanel />
          <main className="relative min-w-0 flex-1 overflow-hidden bg-black">
            <BoardCanvas />
            <Popview />
          </main>
          <ToolPanel />
        </div>
        <MessageBar />
        <div className="flex h-[34px] shrink-0 flex-col border-t-[3px] border-[#708080] bg-white pb-[3px]">
          <div className="flex-1 border-2 border-b border-l-0 border-black bg-[#b4ffff]">
            <div className="h-full border-b-2 border-r-2 border-t-2 border-b-[#60a0a0] border-r-[#60a0a0] border-t-[#dcffff]" />
          </div>
        </div>
      </div>
      <Taskbar />
    </div>
  );
}
